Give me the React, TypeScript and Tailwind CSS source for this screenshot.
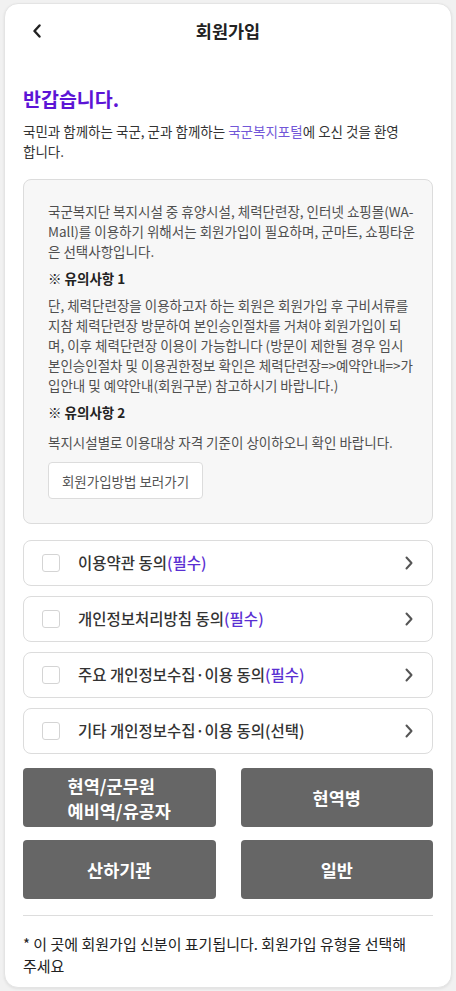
import { useState } from "react";

const agreements = [
	{ label: "이용약관 동의", tag: "(필수)", required: true },
	{ label: "개인정보처리방침 동의", tag: "(필수)", required: true },
	{ label: "주요 개인정보수집·이용 동의", tag: "(필수)", required: true },
	{ label: "기타 개인정보수집·이용 동의", tag: "(선택)", required: false },
];

const ChevronRight = () => (
	<svg width="10" height="14" viewBox="0 0 10 14" fill="none">
		<path d="M2.5 1.5 L7.5 7 L2.5 12.5" stroke="#555" strokeWidth="2" strokeLinecap="round" strokeLinejoin="round" />
	</svg>
);

const MemberTypeButton = ({ lines }: { lines: string[] }) => (
	<button
		type="button"
		className="h-[59px] rounded-[4px] bg-[#666666] flex items-center justify-center text-white font-bold text-[17.5px] leading-[25px]"
	>
		<span className="text-left">
			{lines.map((l) => (
				<span key={l} className="block">
					{l}
				</span>
			))}
		</span>
	</button>
);

export default function App() {
	const [checked, setChecked] = useState<boolean[]>([false, false, false, false]);

	const toggle = (i: number) => {
		setChecked((prev) => prev.map((v, idx) => (idx === i ? !v : v)));
	};

	return (
		<div className="min-h-[991px] bg-[#f1f1f1] px-1 pt-[3px] pb-1 font-['Noto_Sans_CJK_KR','Noto_Sans',sans-serif]">
			<div className="bg-white rounded-[14px] border border-[#e4e4e4] shadow-[0_1px_3px_rgba(0,0,0,0.08)] min-h-[984px]">
				{/* header */}
				<div className="h-[54px] grid grid-cols-[1fr_auto_1fr] items-center">
					<button type="button" className="pl-[27px] flex items-center">
						<svg width="10" height="14" viewBox="0 0 10 14" fill="none">
							<path d="M7.5 1.5 L2.5 7 L7.5 12.5" stroke="#222" strokeWidth="2.4" strokeLinecap="round" strokeLinejoin="round" />
						</svg>
					</button>
					<h1 className="text-[17.5px] font-bold text-[#222]">회원가입</h1>
					<div />
				</div>

				<div className="px-[18px] pb-[10px]">
					<h2 className="mt-[27px] text-[19.5px] leading-[28px] font-bold text-[#5c14d6]">반갑습니다.</h2>
					<p className="mt-[8px] text-[13.5px] leading-[20px] text-[#333]">
						국민과 함께하는 국군, 군과 함께하는 <span className="text-[#7257d8]">국군복지포털</span>에 오신 것을 환영
						<br />
						합니다.
					</p>

					{/* info box */}
					<div className="mt-[18px] rounded-[8px] border border-[#dcdcdc] bg-[#f7f7f7] pl-[24px] pr-[4px] pt-[21px] pb-[24px] text-[13.5px] leading-[20px] text-[#4f4f4f]">
						<p>
							국군복지단 복지시설 중 휴양시설, 체력단련장, 인터넷 쇼핑몰(WA-
							<br />
							Mall)를 이용하기 위해서는 회원가입이 필요하며, 군마트, 쇼핑타운
							<br />
							은 선택사항입니다.
						</p>
						<p className="mt-[7px] font-bold text-[#222]">※ 유의사항 1</p>
						<p className="mt-[7px]">
							단, 체력단련장을 이용하고자 하는 회원은 회원가입 후 구비서류를
							<br />
							지참 체력단련장 방문하여 본인승인절차를 거쳐야 회원가입이 되
							<br />
							며, 이후 체력단련장 이용이 가능합니다 (방문이 제한될 경우 임시
							<br />
							본인승인절차 및 이용권한정보 확인은 체력단련장=&gt;예약안내=&gt;가
							<br />
							입안내 및 예약안내(회원구분) 참고하시기 바랍니다.)
						</p>
						<p className="mt-[7px] font-bold text-[#222]">※ 유의사항 2</p>
						<p className="mt-[10px]">복지시설별로 이용대상 자격 기준이 상이하오니 확인 바랍니다.</p>
						<button
							type="button"
							className="mt-[10px] h-[37px] w-[155px] rounded-[4px] border border-[#dcdcdc] bg-white text-[13.5px] text-[#555]"
						>
							회원가입방법 보러가기
						</button>
					</div>

					{/* agreements */}
					<div className="mt-4 flex flex-col gap-[10px]">
						{agreements.map((a, i) => (
							<div
								key={a.label}
								className="h-[46px] rounded-[8px] border border-[#dcdcdc] flex items-center pl-[18px] pr-[18px] cursor-pointer"
								onClick={() => toggle(i)}
							>
								<span
									className={`w-[18px] h-[18px] rounded-[3px] border ${checked[i] ? "border-[#5c14d6] bg-[#5c14d6]" : "border-[#d4d4d4] bg-white"}`}
								/>
								<span className="ml-[18px] flex-1 text-[15.5px] font-medium text-[#333]">
									{a.label}
									<span className={a.required ? "text-[#5a2fd2]" : ""}>{a.tag}</span>
								</span>
								<ChevronRight />
							</div>
						))}
					</div>

					{/* member types */}
					<div className="mt-[14px] grid grid-cols-2 gap-x-[25px] gap-y-[13px]">
						<MemberTypeButton lines={["현역/군무원", "예비역/유공자"]} />
						<MemberTypeButton lines={["현역병"]} />
						<MemberTypeButton lines={["산하기관"]} />
						<MemberTypeButton lines={["일반"]} />
					</div>

					<div className="mt-4 h-px bg-[#dddddd]" />

					<p className="mt-[17px] text-[15px] leading-[22px] text-[#222]">
						* 이 곳에 회원가입 신분이 표기됩니다. 회원가입 유형을 선택해
						<br />
						주세요
					</p>
				</div>
			</div>
		</div>
	);
}
